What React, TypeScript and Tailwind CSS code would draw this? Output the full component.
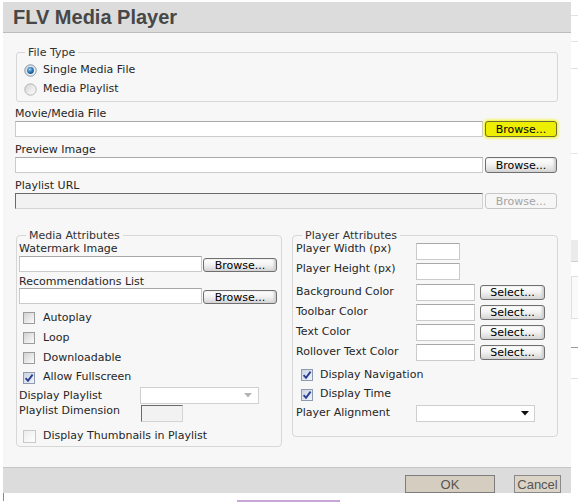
import React from "react";

const FONT = "font-['DejaVu_Sans',Verdana,sans-serif]";

function Radio({ on }: { on?: boolean }) {
  return (
    <svg width="13" height="13" viewBox="0 0 13 13" className="shrink-0">
      <defs>
        <linearGradient id="rbg" x1="0" y1="0" x2="1" y2="1">
          <stop offset="0" stopColor="#d4d4d4" />
          <stop offset="1" stopColor="#ffffff" />
        </linearGradient>
        <radialGradient id="rdot" cx="40%" cy="35%" r="65%">
          <stop offset="0" stopColor="#a8d6f7" />
          <stop offset="0.5" stopColor="#3a86c4" />
          <stop offset="1" stopColor="#164e86" />
        </radialGradient>
      </defs>
      <circle cx="6.5" cy="6.5" r="5.7" fill="url(#rbg)" stroke={on ? "#7f93ab" : "#b4b4b4"} strokeWidth="1" />
      {on && <circle cx="6.5" cy="6.5" r="3.4" fill="url(#rdot)" />}
    </svg>
  );
}

function Check({ on, light }: { on?: boolean; light?: boolean }) {
  if (on) {
    return (
      <span className="w-[12px] h-[12px] shrink-0 border border-[#8e9ab0] bg-[linear-gradient(135deg,#c9d2e2,#f2f5fa)] flex items-center justify-center">
        <svg width="10" height="10" viewBox="0 0 10 10">
          <path d="M1.6 5.2 L4 7.8 L8.6 1.6" fill="none" stroke="#2a3f92" strokeWidth="1.9" />
        </svg>
      </span>
    );
  }
  if (light) {
    return <span className="w-[13px] h-[13px] shrink-0 border border-[#c8c8c8] bg-[linear-gradient(135deg,#ececec,#ffffff)]" />;
  }
  return <span className="w-[12px] h-[12px] shrink-0 border border-[#9c9c9c] bg-[linear-gradient(135deg,#d2d2d2,#fbfbfb)]" />;
}

function Btn({ children, w, h, hi, disabled }: { children: React.ReactNode; w: string; h: string; hi?: boolean; disabled?: boolean }) {
  const base = `${w} ${h} shrink-0 rounded-[3px] border text-[11px] leading-none flex items-center justify-center`;
  if (hi) {
    return (
      <div className={`${base} border-[#6d6d3a] bg-[#eeee00] text-black shadow-[0_0_3px_1px_#f4f400]`}>{children}</div>
    );
  }
  if (disabled) {
    return (
      <div className={`${base} border-[#c6c6c6] bg-[#f6f6f6] text-[#a4a4a4]`}>{children}</div>
    );
  }
  return (
    <div className={`${base} border-[#6f6f6f] bg-[linear-gradient(to_bottom,#ffffff,#f3f3f3_45%,#d5d5d5)] shadow-[inset_-2px_0_2px_#cfcfcf] text-black`}>
      {children}
    </div>
  );
}

const INPUT = "bg-white border border-[#cbcbcb] border-t-[#a8a8a8]";
const INSET = "bg-[#f2f2f2] border border-[#d4d4d4] border-t-[#6a6a6a] border-l-[#6a6a6a]";

function FileRow({ label, first, hi, disabled }: { label: string; first?: boolean; hi?: boolean; disabled?: boolean }) {
  return (
    <div>
      <div className={`${first ? "pt-[5px]" : "pt-[6px]"} leading-[14px] text-[11px] text-[#262626]`}>{label}</div>
      <div className="flex w-[542px] gap-[2px]">
        <div className={`flex-1 h-[16px] ${disabled ? INSET : INPUT}`} />
        <Btn w="w-[72px]" h="h-[16px]" hi={hi} disabled={disabled}>Browse...</Btn>
      </div>
    </div>
  );
}

function ColorRow({ label }: { label: string }) {
  return (
    <div className="h-[20px] flex items-center">
      <div className="w-[120px] text-[11px] text-[#262626]">{label}</div>
      <div className={`w-[59px] h-[17px] ${INPUT}`} />
      <div className="ml-[5px]">
        <Btn w="w-[65px]" h="h-[15px]">Select...</Btn>
      </div>
    </div>
  );
}

export default function App() {
  return (
    <div className={`w-[578px] h-[503px] bg-white overflow-hidden ${FONT} text-[11px] text-[#262626]`}>
      <div className="flex pt-[2px] pl-[3px]">
        {/* Dialog */}
        <div className="w-[568px] h-[491px] flex flex-col bg-[#f7f7f7]">
          {/* Header */}
          <div className="h-[31px] shrink-0 bg-[#dcdcdc] border-b border-[#bdbdbd] pl-[10px] flex items-center">
            <span className="font-['Liberation_Sans',Arial,sans-serif] font-bold text-[20px] text-[#474747] leading-none">
              FLV Media Player
            </span>
          </div>

          {/* Body */}
          <div className="flex-1 px-[12px] pt-[13px]">
            <fieldset className="mx-[1px] border border-[#d7d7d7] rounded-[3px]">
              <legend className="ml-[8px] px-[3px] leading-[13px] text-[11px] text-[#333]">File Type</legend>
              <div className="pt-[2px] pb-[2px] pl-[7px]">
                <div className="h-[19px] flex items-center gap-[6px]">
                  <Radio on />
                  <span>Single Media File</span>
                </div>
                <div className="h-[19px] flex items-center gap-[6px]">
                  <Radio />
                  <span>Media Playlist</span>
                </div>
              </div>
            </fieldset>

            <FileRow label="Movie/Media File" first hi />
            <FileRow label="Preview Image" />
            <FileRow label="Playlist URL" disabled />

            <div className="mt-[20px] mx-[1px] flex items-start gap-[10px]">
              {/* Media Attributes */}
              <fieldset className="w-[266px] border border-[#d7d7d7] rounded-[4px]">
                <legend className="ml-[9px] px-[3px] leading-[13px] text-[11px] text-[#333]">Media Attributes</legend>
                <div className="pl-[2px] pr-[3px]">
                  <div className="leading-[14px]">Watermark Image</div>
                  <div className="flex items-end gap-[1px]">
                    <div className={`w-[183px] h-[16px] ${INPUT}`} />
                    <Btn w="w-[74px]" h="h-[14px]">Browse...</Btn>
                  </div>
                  <div className="pt-[4px] h-[16px] leading-[12px]">Recommendations List</div>
                  <div className="flex items-end gap-[1px]">
                    <div className={`w-[183px] h-[16px] ${INPUT}`} />
                    <Btn w="w-[74px]" h="h-[14px]">Browse...</Btn>
                  </div>
                  <div className="mt-[4px] pl-[4px]">
                    <div className="h-[20px] flex items-center gap-[8px]">
                      <Check />
                      <span>Autoplay</span>
                    </div>
                    <div className="h-[20px] flex items-center gap-[8px]">
                      <Check />
                      <span>Loop</span>
                    </div>
                    <div className="h-[20px] flex items-center gap-[8px]">
                      <Check />
                      <span>Downloadable</span>
                    </div>
                    <div className="h-[19px] flex items-center gap-[8px]">
                      <Check on />
                      <span>Allow Fullscreen</span>
                    </div>
                  </div>
                  <div className="h-[17px] flex items-center">
                    <div className="w-[121px] leading-[14px]">Display Playlist</div>
                    <div className="w-[119px] h-[17px] bg-white border border-[#d0d0d0] flex items-center justify-end pr-[6px]">
                      <svg width="8" height="5" viewBox="0 0 8 5">
                        <path d="M0 0 H8 L4 4.5 Z" fill="#b4b4b4" />
                      </svg>
                    </div>
                  </div>
                  <div className="h-[18px] flex items-start">
                    <div className="w-[122px] leading-[14px]">Playlist Dimension</div>
                    <div className={`mt-[1px] w-[42px] h-[17px] ${INSET}`} />
                  </div>
                  <div className="mt-[4px] h-[20px] pl-[4px] flex items-center gap-[7px]">
                    <Check light />
                    <span>Display Thumbnails in Playlist</span>
                  </div>
                </div>
              </fieldset>

              {/* Player Attributes */}
              <fieldset className="w-[266px] border border-[#d7d7d7] rounded-[4px]">
                <legend className="ml-[9px] px-[3px] leading-[13px] text-[11px] text-[#333]">Player Attributes</legend>
                <div className="pl-[3px] pb-[14px]">
                  <div className="h-[20px] flex items-start">
                    <div className="w-[120px] leading-[14px]">Player Width (px)</div>
                    <div className={`mt-[1px] w-[44px] h-[17px] ${INPUT}`} />
                  </div>
                  <div className="h-[20px] flex items-start">
                    <div className="w-[120px] leading-[14px]">Player Height (px)</div>
                    <div className={`mt-[1px] w-[44px] h-[17px] ${INPUT}`} />
                  </div>
                  <ColorRow label="Background Color" />
                  <ColorRow label="Toolbar Color" />
                  <ColorRow label="Text Color" />
                  <ColorRow label="Rollover Text Color" />
                  <div className="mt-[3px] pl-[5px]">
                    <div className="h-[20px] flex items-center gap-[7px]">
                      <Check on />
                      <span>Display Navigation</span>
                    </div>
                    <div className="h-[19px] flex items-center gap-[7px]">
                      <Check on />
                      <span>Display Time</span>
                    </div>
                  </div>
                  <div className="h-[18px] flex items-center">
                    <div className="w-[120px]">Player Alignment</div>
                    <div className="w-[119px] h-[17px] bg-white border border-[#cfcfcf] flex items-center justify-end pr-[5px]">
                      <svg width="8" height="5" viewBox="0 0 8 5">
                        <path d="M0 0 H8 L4 4.5 Z" fill="#111" />
                      </svg>
                    </div>
                  </div>
                </div>
              </fieldset>
            </div>
          </div>

          {/* Footer */}
          <div className="h-[26px] shrink-0 bg-[#dcdcdc] border-t border-[#c6c6c6] flex justify-end items-end pr-[10px] gap-[19px] font-['Liberation_Sans',Arial,sans-serif]">
            <div className="w-[90px] h-[18px] bg-[#d5cdbf] border border-[#7d7d7d] flex items-center justify-center text-[13px] text-[#555] leading-none">
              OK
            </div>
            <div className="w-[47px] h-[18px] bg-[#dbd4c7] border border-[#8a8a8a] flex items-center justify-center text-[13px] text-[#555] leading-none">
              Cancel
            </div>
          </div>
        </div>

        {/* page behind, right edge */}
        <div className="w-[7px] flex flex-col">
          <div className="mt-[13px] h-px bg-[#e2e2e2]" />
          <div className="mt-[25px] h-px bg-[#e2e2e2]" />
          <div className="mt-[26px] h-px bg-[#e2e2e2]" />
          <div className="mt-[84px] h-px bg-[#e6e6e6]" />
          <div className="mt-[86px] h-[22px] bg-[#ebebeb] border-b border-[#d0d0d0]" />
          <div className="mt-[14px] h-[43px] border-l border-y border-[#e0e0e0] bg-[#fafafa]" />
          <div className="mt-[28px] h-px bg-[#9a9a9a]" />
          <div className="mt-[30px] h-px bg-[#e0e0e0]" />
        </div>
      </div>
      <div className="flex h-[10px]">
        <div className="ml-[3px] w-px h-[8px] bg-[#8a8a8a]" />
        <div className="ml-[233px] mt-[7px] w-[103px] h-[2px] bg-[#c9a6d8]" />
      </div>
    </div>
  );
}
